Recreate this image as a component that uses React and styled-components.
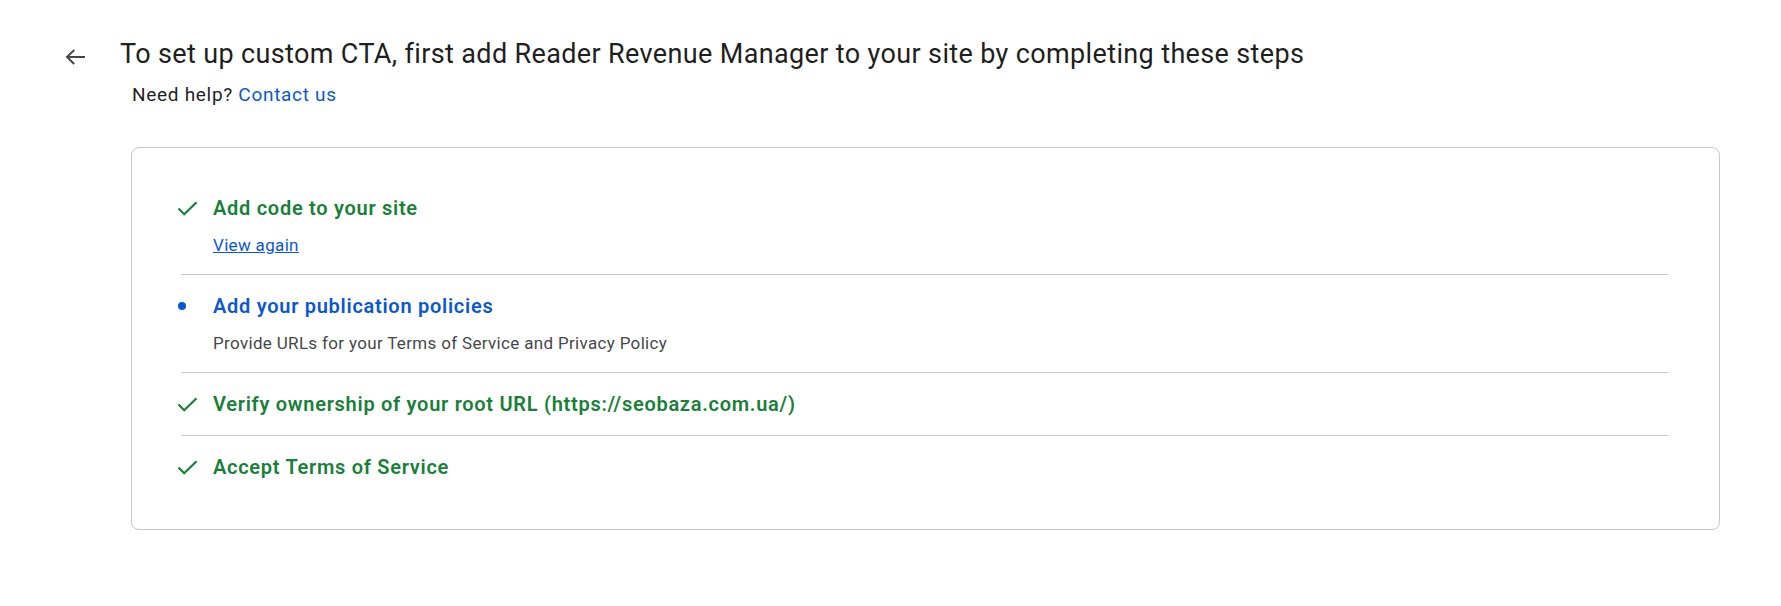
import styled, { createGlobalStyle } from "styled-components";

const GlobalStyle = createGlobalStyle`
  body {
    margin: 0;
    background: #fff;
    font-family: Roboto, "Liberation Sans", Arial, sans-serif;
    color: #1f1f1f;
  }
`;

const Page = styled.main`
  padding: 38px 61px 40px 55px;
`;

const HeaderRow = styled.div`
  display: flex;
  align-items: flex-start;
  gap: 25px;
`;

const BackButton = styled.button`
  width: 40px;
  height: 40px;
  margin-top: -1px;
  padding: 0;
  border: none;
  background: transparent;
  display: flex;
  align-items: center;
  justify-content: center;
  color: #444746;
  cursor: pointer;
`;

const Title = styled.h1`
  margin: 0;
  font-size: 27px;
  line-height: 32px;
  font-weight: 400;
  letter-spacing: 0.36px;
  color: #1f1f1f;
`;

const Help = styled.p`
  margin: 6px 0 0 77px;
  font-size: 19px;
  line-height: 24px;
  letter-spacing: 0.7px;
  color: #1f1f1f;
`;

const Link = styled.a`
  color: #0b57d0;
  text-decoration: none;
`;

const Card = styled.section`
  margin: 40px 0 0 76px;
  border: 1px solid #c7c7c7;
  border-radius: 8px;
  padding: 29px 51px 31px 43px;
`;

const Step = styled.div`
  display: grid;
  grid-template-columns: 24px 1fr;
  column-gap: 14px;
  padding: 19px 0;
`;

const IconCell = styled.div`
  height: 24px;
  display: flex;
  align-items: center;
  justify-content: ${({ dot }) => (dot ? "flex-start" : "center")};
`;

const Dot = styled.span`
  width: 8px;
  height: 8px;
  margin-left: 3px;
  border-radius: 50%;
  background: #0b57d0;
`;

const StepTitle = styled.div`
  font-size: 20px;
  line-height: 24px;
  font-weight: 600;
  letter-spacing: 0.72px;
  color: ${({ active }) => (active ? "#0b57d0" : "#188038")};
`;

const StepBody = styled.div`
  margin-top: 15px;
  font-size: 17px;
  line-height: 20px;
  letter-spacing: 0.33px;
  color: #474747;
`;

const UnderLink = styled.a`
  color: #0b57d0;
  text-decoration: underline;
`;

const Divider = styled.hr`
  margin: 0 0 0 6px;
  border: none;
  border-top: 1px solid #c7c7c7;
`;

function Check() {
  return (
    <svg width="21" height="15" viewBox="0 0 21 15" fill="none">
      <path d="M1.5 7.5 L7.2 13.2 L19.5 1.2" stroke="#188038" strokeWidth="2.2" />
    </svg>
  );
}

function ArrowBack() {
  return (
    <svg width="20" height="16" viewBox="0 0 20 16" fill="none">
      <path d="M20 8 H2.5 M9.2 1 L2 8 L9.2 15" stroke="#444746" strokeWidth="2" />
    </svg>
  );
}

const steps = [
  { title: "Add code to your site", done: true, body: <UnderLink href="#">View again</UnderLink> },
  { title: "Add your publication policies", done: false, body: "Provide URLs for your Terms of Service and Privacy Policy" },
  { title: "Verify ownership of your root URL (https://seobaza.com.ua/)", done: true },
  { title: "Accept Terms of Service", done: true },
];

export default function App() {
  return (
    <>
      <GlobalStyle />
      <Page>
        <HeaderRow>
          <BackButton aria-label="Back">
            <ArrowBack />
          </BackButton>
          <Title>
            To set up custom CTA, first add Reader Revenue Manager to your site by completing these steps
          </Title>
        </HeaderRow>
        <Help>
          Need help? <Link href="#">Contact us</Link>
        </Help>
        <Card>
          {steps.map((s, i) => (
            <div key={s.title}>
              {i > 0 && <Divider />}
              <Step>
                <IconCell dot={!s.done}>{s.done ? <Check /> : <Dot />}</IconCell>
                <div>
                  <StepTitle active={!s.done}>{s.title}</StepTitle>
                  {s.body && <StepBody>{s.body}</StepBody>}
                </div>
              </Step>
            </div>
          ))}
        </Card>
      </Page>
    </>
  );
}
